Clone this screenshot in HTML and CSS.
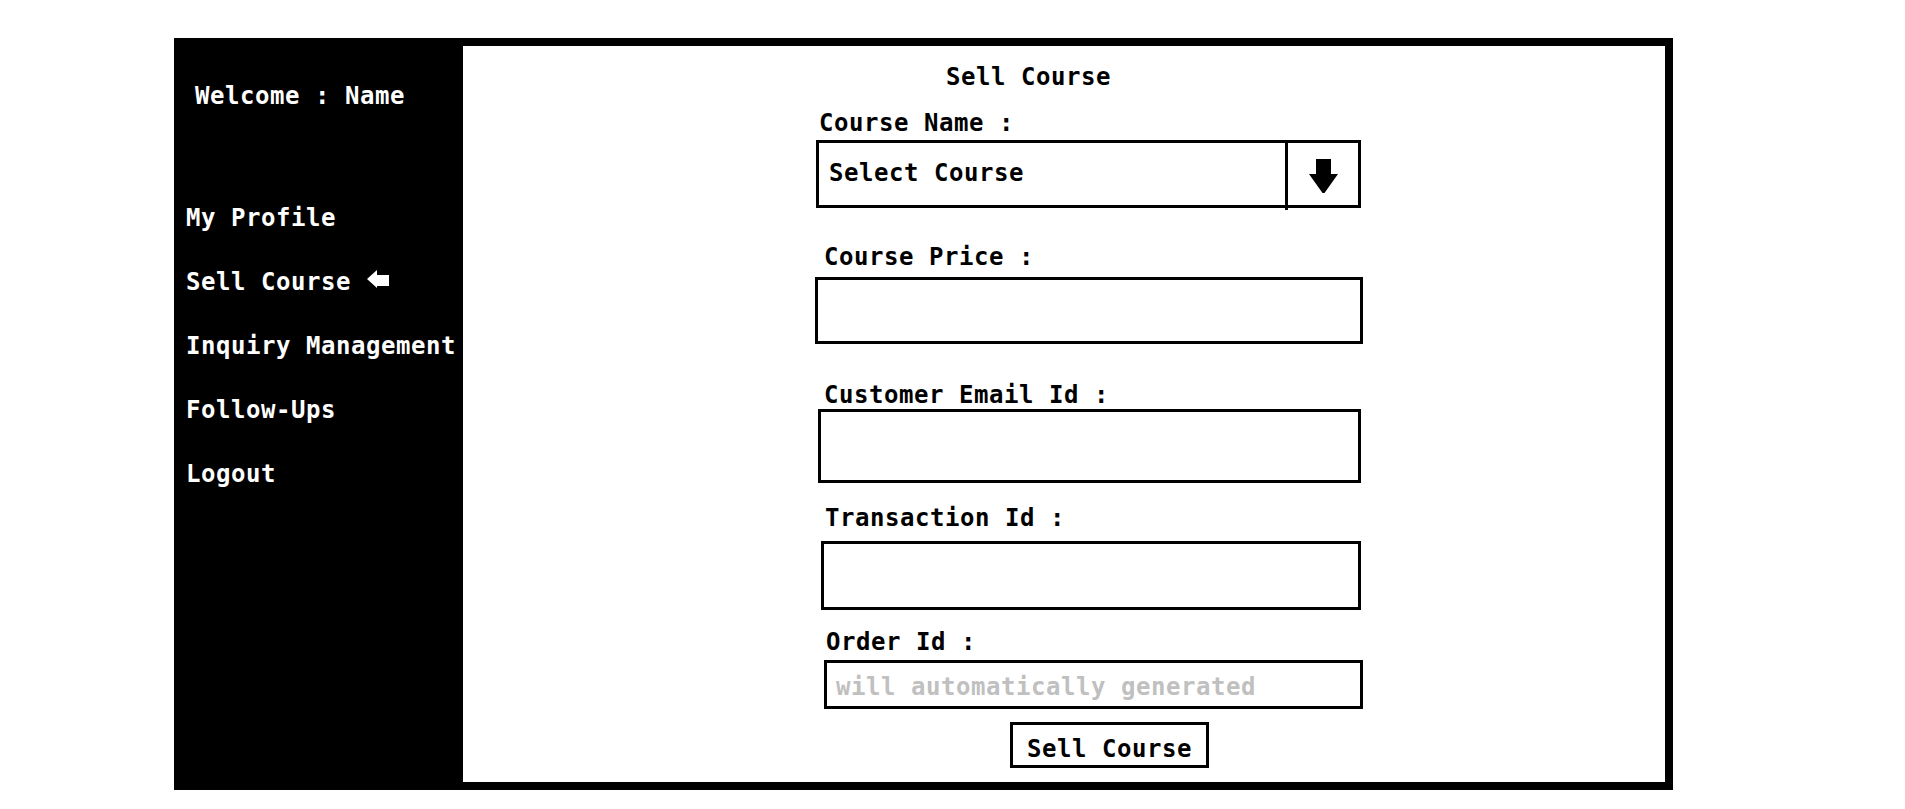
FILE: index.html
```html
<!DOCTYPE html>
<html lang="en">
<head>
<meta charset="utf-8">
<title>Sell Course</title>
<link rel="stylesheet" href="styles.css">
</head>
<body>
<div class="frame">
  <aside class="sidebar">
    <div class="welcome">Welcome : Name</div>
    <nav class="nav">
      <a class="nav-item">My Profile</a>
      <a class="nav-item">Sell Course <svg class="nav-arrow" viewBox="0 0 22 18" aria-hidden="true"><polygon points="0,9 10,0 10,5 22,5 22,16 10,16 10,18" fill="#fff"/></svg></a>
      <a class="nav-item">Inquiry Management</a>
      <a class="nav-item">Follow-Ups</a>
      <a class="nav-item">Logout</a>
    </nav>
  </aside>
  <main class="main">
    <form class="form">
      <h1 class="title">Sell Course</h1>

      <label class="label label-name">Course Name :</label>
      <div class="box select">
        <div class="select-value">Select Course</div>
        <div class="select-btn">
          <svg class="select-arrow" viewBox="0 0 29 34" aria-hidden="true"><polygon points="7,0 22,0 22,15 29,15 15.5,34 13.5,34 0,15 7,15" fill="#000"/></svg>
        </div>
      </div>

      <label class="label label-price">Course Price :</label>
      <input class="box input-price" type="text">

      <label class="label label-email">Customer Email Id :</label>
      <input class="box input-email" type="text">

      <label class="label label-txn">Transaction Id :</label>
      <input class="box input-txn" type="text">

      <label class="label label-order">Order Id :</label>
      <input class="box input-order" type="text" placeholder="will automatically generated">

      <button class="submit" type="button">Sell Course</button>
    </form>
  </main>
</div>
</body>
</html>
```

FILE: styles.css
```css
* {
  box-sizing: border-box;
}

body {
  margin: 0;
  background: #fff;
  color: #000;
  font-family: "DejaVu Sans Mono", "Liberation Mono", monospace;
  font-weight: 700;
  font-size: 24px;
  letter-spacing: 0.55px;
  line-height: 28px;
}

.frame {
  display: flex;
  width: 1499px;
  height: 752px;
  margin: 38px 0 0 174px;
  border: 8px solid #000;
}

/* ---------- sidebar ---------- */
.sidebar {
  flex: 0 0 281px;
  background: #000;
  color: #fff;
  padding-top: 36px;
}

.welcome {
  padding-left: 13px;
  white-space: nowrap;
}

.nav {
  display: flex;
  flex-direction: column;
  margin-top: 76px;
}

.nav-item {
  display: block;
  line-height: 64px;
  padding-left: 4px;
  white-space: nowrap;
  color: #fff;
  text-decoration: none;
}

.nav-arrow {
  width: 22px;
  height: 18px;
  margin-left: 1px;
  vertical-align: 2px;
}

/* ---------- main ---------- */
.main {
  flex: 1;
  background: #fff;
}

.form {
  display: flex;
  flex-direction: column;
  align-items: flex-start;
  width: 548px;
  margin-left: 352px;
}

.title {
  margin: 17px 0 0 131px;
  font-size: 24px;
  font-weight: 700;
  line-height: 28px;
}

.label {
  display: block;
  margin-left: 9px;
  white-space: nowrap;
}

.label-name { margin-top: 18px; margin-left: 4px; }
.label-price { margin-top: 35px; }
.label-email { margin-top: 37px; }
.label-txn { margin-top: 21px; margin-left: 10px; }
.label-order { margin-top: 18px; margin-left: 11px; }

.box {
  display: block;
  width: 548px;
  border: 3px solid #000;
  border-radius: 0;
  background: #fff;
  color: #000;
  font: inherit;
  letter-spacing: inherit;
  padding: 0 9px;
  margin: 0;
  outline: none;
}

.box::placeholder {
  color: #c0c0c0;
  opacity: 1;
}

.select {
  display: flex;
  width: 545px;
  height: 68px;
  margin: 3px 0 0 1px;
  padding: 0;
}

.select-value {
  flex: 1;
  display: flex;
  align-items: center;
  padding: 0 0 2px 10px;
}

.select-btn {
  position: relative;
  flex: 0 0 73px;
  display: flex;
  align-items: center;
  justify-content: center;
  padding-top: 3px;
  border-left: 3px solid #000;
}

.select-btn::after {
  content: "";
  position: absolute;
  left: -3px;
  bottom: -5px;
  width: 3px;
  height: 5px;
  background: #000;
}

.select-arrow {
  width: 29px;
  height: 34px;
}

.input-price { height: 67px; margin-top: 6px; }
.input-email { width: 543px; height: 74px; margin: 0 0 0 3px; }
.input-txn { width: 540px; height: 69px; margin: 9px 0 0 6px; }
.input-order { width: 539px; height: 49px; margin: 4px 0 0 9px; padding-top: 4px; }

.submit {
  display: block;
  width: 199px;
  height: 46px;
  margin: 13px 0 0 195px;
  padding: 8px 0 0 14px;
  border: 3px solid #000;
  border-radius: 0;
  background: #fff;
  color: #000;
  font: inherit;
  letter-spacing: inherit;
  line-height: 28px;
  text-align: left;
}
```
